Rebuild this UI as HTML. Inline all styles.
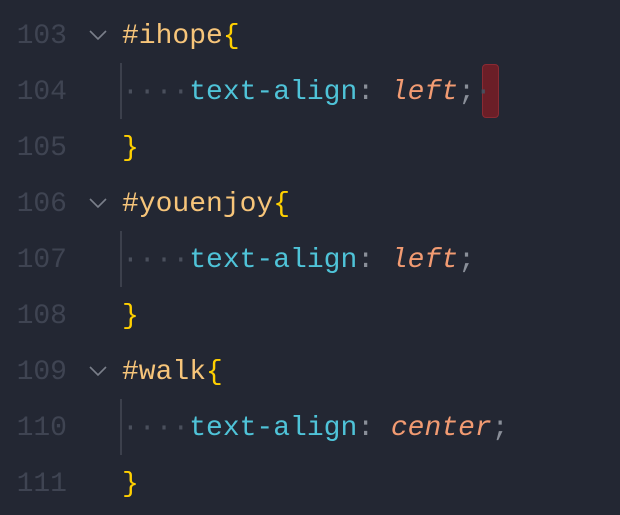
<!DOCTYPE html><html><head><style>
body{margin:0;width:620px;height:506px;background:#232733;overflow:hidden;font-family:"Liberation Mono",monospace;font-size:28px;}
.l{position:absolute;left:0;height:56px;line-height:60px;white-space:pre;}
.n{position:absolute;left:0;width:67px;text-align:right;color:#3f4452;}
.c{position:absolute;left:122px;}
.s{color:#f7c57a}.b{color:#ffd000}.p{color:#4fc3d8}.v{color:#f29b72;font-style:italic}.g{color:#8a8f99}.d{color:#4a4f5c}
.guide{position:absolute;left:120px;width:2px;height:56px;background:#3c404c}
.chev{position:absolute;left:88px;}
</style></head><body>
<div class="l" style="top:7px"><span class="n">103</span><svg class="chev" width="20" height="56"><path d="M2 24 L10 32 L18 24" stroke="#7a7f8a" stroke-width="1.6" fill="none"/></svg><span class="c"><span class="s">#ihope</span><span class="b">{</span></span></div>
<div class="l" style="top:63px"><span class="n">104</span><div class="guide"></div><div style="position:absolute;left:482px;top:1px;width:17px;height:54px;background:#6b1e27;border:1px solid #8a2a33;border-radius:4px;box-sizing:border-box"></div><span class="c"><span class="d">····</span><span class="p">text-align</span><span class="g">: </span><span class="v">left</span><span class="g">;</span><span class="d">·</span></span></div>
<div class="l" style="top:119px"><span class="n">105</span><span class="c"><span class="b">}</span></span></div>
<div class="l" style="top:175px"><span class="n">106</span><svg class="chev" width="20" height="56"><path d="M2 24 L10 32 L18 24" stroke="#7a7f8a" stroke-width="1.6" fill="none"/></svg><span class="c"><span class="s">#youenjoy</span><span class="b">{</span></span></div>
<div class="l" style="top:231px"><span class="n">107</span><div class="guide"></div><span class="c"><span class="d">····</span><span class="p">text-align</span><span class="g">: </span><span class="v">left</span><span class="g">;</span></span></div>
<div class="l" style="top:287px"><span class="n">108</span><span class="c"><span class="b">}</span></span></div>
<div class="l" style="top:343px"><span class="n">109</span><svg class="chev" width="20" height="56"><path d="M2 24 L10 32 L18 24" stroke="#7a7f8a" stroke-width="1.6" fill="none"/></svg><span class="c"><span class="s">#walk</span><span class="b">{</span></span></div>
<div class="l" style="top:399px"><span class="n">110</span><div class="guide"></div><span class="c"><span class="d">····</span><span class="p">text-align</span><span class="g">: </span><span class="v">center</span><span class="g">;</span></span></div>
<div class="l" style="top:455px"><span class="n">111</span><span class="c"><span class="b">}</span></span></div>
</body></html>
